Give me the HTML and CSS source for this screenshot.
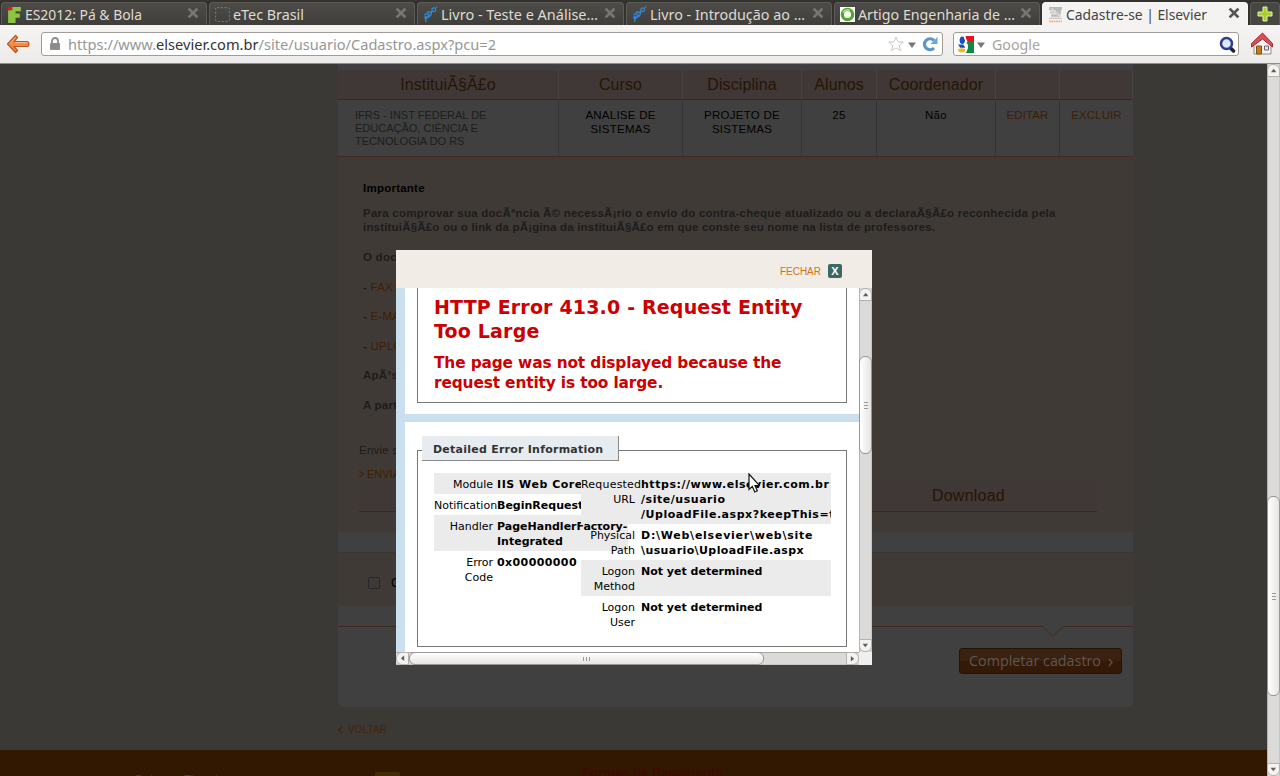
FILE: index.html
```html
<!DOCTYPE html>
<html lang="pt-BR">
<head>
<meta charset="utf-8">
<title>Cadastre-se | Elsevier</title>
<link rel="stylesheet" href="styles.css">
</head>
<body>
<svg class="defs" width="0" height="0">
  <defs>
    <symbol id="close" viewBox="0 0 12 12"><path d="M2.500 2.500l7 7M9.500 2.500l-7 7" stroke="currentColor" stroke-width="2.600" stroke-linecap="square"/></symbol>
    <symbol id="dna" viewBox="0 0 16 18"><g fill="none" stroke="#2f8de0" stroke-width="1.300"><circle cx="11.500" cy="4" r="2"/><path d="M14 1.500l1-1M7 7.500c2-1 3-1 2.500-3M4 7c3-2 7 0 4 3s-5 3-6 0M1.500 9c4-2 6 1 4 3s-4 1-4 0M2 13l4-2M3 13v4M5 9l3 2"/></g></symbol>
    <symbol id="up" viewBox="0 0 13 13"><path d="M3.500 8.500H10L6.700 4.500z" fill="#5f5f5c"/></symbol>
  </defs>
</svg>

<header class="tabs">
  <div class="tab">
    <svg class="fav" viewBox="0 0 14 16"><path d="M3 1h10v4H8v2h4v4H8v5H1V4h2z" fill="#8cc63f"/><path d="M1 1h4v3H1z" fill="#e8141c"/></svg>
    <svg class="label" width="117" height="24"><text x="0" y="19" textLength="117" lengthAdjust="spacingAndGlyphs">ES2012: Pá &amp; Bola</text></svg>
    <svg class="x"><use href="#close"/></svg>
  </div>
  <div class="tab">
    <svg class="fav" viewBox="0 0 14 16"><rect x=".5" y="1.500" width="13" height="13" rx="1.500" fill="none" stroke="#777672" stroke-dasharray="2 1.500"/></svg>
    <svg class="label" width="71" height="24"><text x="0" y="19" textLength="71" lengthAdjust="spacingAndGlyphs">eTec Brasil</text></svg>
    <svg class="x"><use href="#close"/></svg>
  </div>
  <div class="tab">
    <svg class="fav"><use href="#dna"/></svg>
    <svg class="label" width="157" height="24"><text x="0" y="19" textLength="157" lengthAdjust="spacingAndGlyphs">Livro - Teste e Análise…</text></svg>
    <svg class="x"><use href="#close"/></svg>
  </div>
  <div class="tab">
    <svg class="fav"><use href="#dna"/></svg>
    <svg class="label" width="156" height="24"><text x="0" y="19" textLength="155" lengthAdjust="spacingAndGlyphs">Livro - Introdução ao …</text></svg>
    <svg class="x"><use href="#close"/></svg>
  </div>
  <div class="tab">
    <svg class="fav" viewBox="0 0 16 16"><path d="M0 0h16v16H0z" fill="#fff"/><circle cx="8" cy="8" r="5.500" fill="none" stroke="#55a630" stroke-width="3.500"/><path d="M3.500 6a5 5 0 0 1 7-2.500" fill="none" stroke="#b5e08c" stroke-width="1.500"/></svg>
    <svg class="label" width="158" height="24"><text x="0" y="19" textLength="157" lengthAdjust="spacingAndGlyphs">Artigo Engenharia de …</text></svg>
    <svg class="x"><use href="#close"/></svg>
  </div>
  <div class="tab active">
    <svg class="fav" viewBox="0 0 14 16"><path d="M1 1h12v3H1zM2 5h4v2H2zM7 4h5v4H7zM3 8h8v2H3zM1 11h12v1H1z" fill="#aaa" opacity=".8"/><path d="M2 5l10 5M3 2l9 7" stroke="#ddd"/><path d="M1 14.500h12" stroke="#f3a871" stroke-width="1.500" stroke-dasharray="1.500 .7"/></svg>
    <svg class="label" width="142" height="24"><text x="0" y="19" textLength="141" lengthAdjust="spacingAndGlyphs">Cadastre-se | Elsevier</text></svg>
    <svg class="x"><use href="#close"/></svg>
  </div>
  <div class="newtab"><svg width="16" height="16" viewBox="0 0 16 16"><path d="M6 1h4v5h5v4h-5v5H6v-5H1V6h5z" fill="#a5cf2b" stroke="#e4f0b8"/></svg></div>
</header>

<nav class="bar">
  <svg class="back" width="24" height="20" viewBox="0 0 24 20"><path d="M9.500 1.500L1.500 10l8 8.500 2-2-3.500-4h13c2.500 0 2.500-5 0-5H8l3.500-4z" fill="#ee8a45" stroke="#c4541f" stroke-width="1.200" stroke-linejoin="round"/><path d="M4 9.500l5.500-6M9 8.700h12" stroke="#f9bd8d" fill="none"/></svg>
  <div class="field url">
    <svg width="12" height="14" viewBox="0 0 12 14"><path d="M3 6V4a3 3 0 0 1 6 0v2" fill="none" stroke="#8c8c8c" stroke-width="1.800"/><rect x="1" y="6" width="10" height="7" rx="1" fill="#8c8c8c"/></svg>
    <svg class="address" width="432" height="22"><text x="0" y="17" textLength="428" lengthAdjust="spacingAndGlyphs">https://www.<tspan class="host">elsevier.com.br</tspan>/site/usuario/Cadastro.aspx?pcu=2</text></svg>
    <svg class="star" width="16" height="16" viewBox="0 0 16 16"><path d="M8 .9l2 4.900 5.300.3-4.100 3.400 1.400 5.200L8 11.900l-4.600 2.800 1.400-5.200L.7 6.100 6 5.800z" fill="#fff" stroke="#c9c9c9"/></svg>
    <svg class="caret" width="8" height="6" viewBox="0 0 8 6"><path d="M0 .5h8L4 6z" fill="#777"/></svg>
    <svg class="reload" width="16" height="16" viewBox="0 0 16 16"><path d="M12 12A5.500 5.500 0 1 1 12 4.500" fill="none" stroke="#5b95cb" stroke-width="3.200"/><path d="M15.500 1v7H8.500z" fill="#6ca5d8"/></svg>
  </div>
  <div class="field search">
    <svg width="17" height="17" viewBox="0 0 16 16"><path d="M8 0h8v7H9z" fill="#e8131c"/><path d="M9 5h7v11H8c3-4 3-7 1-11z" fill="#128a43"/><ellipse cx="5" cy="4" rx="2.500" ry="3.500" fill="#1a50b5"/><ellipse cx="4.500" cy="13.500" rx="3.500" ry="2" fill="#f3b61f"/><path d="M1 8l5 0 2 3H3z" fill="#1a50b5"/><path d="M7 1l2 4-2 3 2 3-1 4" fill="none" stroke="#fff" stroke-width="1.500"/></svg>
    <svg class="caret" width="8" height="6" viewBox="0 0 8 6"><path d="M0 .5h8L4 6z" fill="#777"/></svg>
    <svg class="hint" width="50" height="22"><text x="0" y="17" textLength="48" lengthAdjust="spacingAndGlyphs">Google</text></svg>
    <svg class="lens" width="17" height="17" viewBox="0 0 17 17"><path d="M10.500 11l4 4" stroke="#222" stroke-width="3.500" stroke-linecap="round"/><circle cx="7.500" cy="7.500" r="5.500" fill="#dfe7f8" stroke="#2c3c94" stroke-width="2.500"/></svg>
  </div>
  <svg class="home" width="24" height="24" viewBox="0 0 24 24"><path d="M4 12v10h17V12l-8.500-8z" fill="#f4f3f1" stroke="#8f8c87"/><path d="M6.500 14h5v8h-5z" fill="#c57a1a" stroke="#875313"/><path d="M14.500 14h4v4h-4z" fill="#dce6ef" stroke="#667"/><path d="M12.500 1L1.500 11.500v3.500L12.500 7l10 8v-3.500z" fill="#d35258" stroke="#a3292f" stroke-linejoin="round"/></svg>
</nav>

<div class="window">
  <main class="page">
    <section class="card">
      <table class="courses">
        <colgroup><col class="c1"><col class="c2"><col class="c3"><col class="c4"><col class="c5"><col class="c6"><col class="c7"></colgroup>
        <tr><th>InstituiÃ§Ã£o</th><th>Curso</th><th>Disciplina</th><th>Alunos</th><th>Coordenador</th><th></th><th></th></tr>
        <tr><td class="inst">IFRS - INST FEDERAL DE EDUCAÇÃO, CIÊNCIA E TECNOLOGIA DO RS</td><td>ANALISE DE SISTEMAS</td><td>PROJETO DE SISTEMAS</td><td>25</td><td>Não</td><td class="act">EDITAR</td><td class="act">EXCLUIR</td></tr>
      </table>
      <div class="info">
        <p class="title">Importante</p>
        <p class="lead">Para comprovar sua docÃªncia Ã© necessÃ¡rio o envio do contra-cheque atualizado ou a declaraÃ§Ã£o reconhecida pela<br><span class="tight">instituiÃ§Ã£o ou o link da pÃ¡gina da instituiÃ§Ã£o em que conste seu nome na lista de professores.</span></p>
        <p>O doc</p>
        <p>- <span class="opt">FAX:</span></p>
        <p>- <span class="opt">E-MAIL</span></p>
        <p>- <span class="opt">UPLOAD</span></p>
        <p>ApÃ³s</p>
        <p>A partir</p>
        <p class="send">Envie s</p>
        <p class="sendlink"><svg width="5" height="8" viewBox="0 0 5 8"><path d="M.5 1L4 4 .5 7" fill="none" stroke="#472205" stroke-width="1.300"/></svg>ENVIAR</p>
        <div class="download">Download</div>
      </div>
      <div class="accept"><span class="box"></span><span>C</span></div>
      <div class="finish">
        <svg class="notch" width="20" height="12" viewBox="0 0 20 12"><path d="M0 0h20v1L10 11 0 1z" fill="#404040"/><path d="M0 .5L10 10.500 20 .5" fill="none" stroke="#3a2c22"/></svg>
        <div class="button"><svg width="150" height="24"><text x="1" y="17" textLength="132" lengthAdjust="spacingAndGlyphs">Completar cadastro</text><path d="M141 10l3 3.500-3 3.500" fill="none" stroke="#56524e" stroke-width="1.400"/></svg></div>
      </div>
    </section>
    <div class="return"><svg width="5" height="8" viewBox="0 0 5 8"><path d="M4 1L.8 4 4 7" fill="none" stroke="#472205" stroke-width="1.300"/></svg>VOLTAR</div>
    <footer class="foot"><span class="f1">Sobre a Elsevier</span><i class="chip"></i><b class="f2">Formas de Pagamento</b></footer>
  </main>
  <div class="vbar main-v"><span class="btn"><svg><use href="#up"/></svg></span><span class="thumb"><i></i><i></i><i></i></span><span class="btn down"><svg><use href="#up"/></svg></span></div>

  <aside class="modal">
    <div class="mhead">FECHAR<svg width="14" height="14" viewBox="0 0 14 14"><rect width="14" height="14" rx="2" fill="#3c6668"/></svg><b class="mx">X</b></div>
    <div class="mbody">
      <div class="frame">
        <div class="panel first">
          <div class="errbox">
            <h2>HTTP Error 413.0 - Request Entity Too Large</h2>
            <h3>The page was not displayed because the request entity is too large.</h3>
          </div>
        </div>
        <div class="panel second">
          <div class="detail">
            <div class="legend">Detailed Error Information</div>
            <div class="lists">
              <dl class="left">
                <div class="alt"><dt>Module</dt><dd class="s5">IIS Web Core</dd></div>
                <div><dt>Notification</dt><dd>BeginRequest</dd></div>
                <div class="alt"><dt>Handler</dt><dd>PageHandlerFactory-<br>Integrated</dd></div>
                <div><dt>Error<br>Code</dt><dd class="s4">0x00000000</dd></div>
              </dl>
              <dl class="right">
                <div class="alt"><dt><span class="wide">Requested</span><br>URL</dt><dd class="s5">https://www.elsevier.com.br<br>/site/usuario<br>/UploadFile.aspx?keepThis=true</dd></div>
                <div><dt>Physical<br>Path</dt><dd><span class="s7">D:\Web\elsevier\web\site</span><br><span class="s4">\usuario\UploadFile.aspx</span></dd></div>
                <div class="alt"><dt>Logon<br>Method</dt><dd>Not yet determined</dd></div>
                <div><dt>Logon<br>User</dt><dd>Not yet determined</dd></div>
              </dl>
            </div>
          </div>
        </div>
      </div>
      <div class="vbar modal-v"><span class="btn"><svg><use href="#up"/></svg></span><span class="thumb"><i></i><i></i><i></i></span><span class="btn down"><svg><use href="#up"/></svg></span></div>
    </div>
    <div class="hrow">
      <div class="hbar"><span class="btn lft"><svg><use href="#up"/></svg></span><span class="thumb"><i></i><i></i><i></i></span><span class="btn rgt"><svg><use href="#up"/></svg></span></div>
    </div>
  </aside>
  <svg class="cursor" width="12" height="21" viewBox="0 0 12 21"><path d="M1 1v15.500l3.300-3 2.500 5.500 2.500-1.200L7 12.500h4.500z" fill="#fff" stroke="#111" stroke-width="1.200"/></svg>
</div>
</body>
</html>
```
FILE: styles.css
```css
* { box-sizing: border-box; }
body { margin: 0; width: 1280px; height: 776px; overflow: hidden; display: flex; flex-direction: column; font-family: "Liberation Sans", Arial, sans-serif; background: #3c3b37; }
p, h2, h3, dl, dd { margin: 0; }
svg { display: block; flex: none; }
.defs { position: absolute; }

/* tab strip */
.tabs { height: 25px; flex: none; display: flex; gap: 2px; padding: 2px 0 0 1px; background: #33322e; font: 14.5px "Noto Sans", "Open Sans", sans-serif; }
.tab { width: 206.2px; height: 23px; flex: none; display: flex; align-items: center; padding: 0 7px 0 5px; border: 1px solid #5d5b56; border-bottom: 0; border-radius: 4px 4px 0 0; background: linear-gradient(#4d4c48, #3f3e3a); color: #787671; }
.fav { width: 15px; height: 17px; margin-right: 3px; }
.label { margin-top: -3px; fill: #dfdbd2; overflow: visible; }
.x { width: 12px; height: 12px; margin-left: auto; margin-top: -2px; }
.tab.active { background: #f4f3f2; border-color: #f7f7f6; color: #555; }
.tab.active .label { fill: #45443f; }
.newtab { flex: 1; height: 23px; display: flex; justify-content: center; align-items: center; border: 1px solid #5d5b56; border-bottom: 0; border-radius: 4px 4px 0 0; background: #474642; }

/* navigation bar */
.bar { height: 39px; flex: none; display: flex; align-items: center; padding: 0 6px 0 6px; background: linear-gradient(#f5f4f3, #edebe9); border-bottom: 1px solid #918e8a; font: 14.5px "Noto Sans", "Open Sans", sans-serif; }
.back { margin-right: 11px; }
.field { height: 24px; display: flex; align-items: center; background: #fff; border: 1px solid #a09c97; border-radius: 3px; }
.url { width: 902px; padding: 0 4px 0 7px; }
.address { margin-left: 7px; fill: #979797; overflow: visible; }
.host { fill: #333; }
.star { margin-left: auto; }
.caret { margin: 2px 5px 0 4px; }
.reload { margin-left: 1px; }
.search { width: 286px; margin-left: 10px; padding: 0 2px 0 3px; }
.search .caret { margin: 2px 7px 0 3px; }
.hint { fill: #a8a39d; overflow: visible; }
.lens { margin-left: auto; }
.home { margin-left: 11px; }

/* dimmed site */
.window { position: relative; flex: 1; display: flex; }
.page { width: 1267px; height: 712px; overflow: hidden; background: #3b3936; }
.card { width: 795px; height: 643px; margin-left: 338px; padding-top: 6px; background: #404040; border-radius: 0 0 5px 5px; }
.courses { width: 795px; table-layout: fixed; border-collapse: separate; border-spacing: 0; font-size: 11.5px; letter-spacing: .25px; line-height: 14px; text-align: center; color: #000; }
.c1 { width: 221px; } .c2 { width: 124px; } .c3 { width: 119px; } .c4 { width: 75px; } .c5 { width: 119px; } .c6 { width: 64px; } .c7 { width: 73px; }
.courses th { height: 30px; padding: 0; font-size: 16px; letter-spacing: .1px; font-weight: 400; color: #271503; background: #403836; border-right: 1px solid #454241; border-bottom: 1px solid #362820; }
.courses td { height: 57px; padding: 8px 8px 0; vertical-align: top; border-right: 1px solid #353434; border-bottom: 1px solid #3e2a1f; }
.courses td:last-child { border-right: 0; }
.courses .inst { padding: 9px 40px 0 17px; text-align: left; font-size: 11px; letter-spacing: 0; line-height: 13px; color: #1d1d1d; }
.courses .act { padding: 8px 0 0; letter-spacing: .1px; color: #3f1e02; }
.info { height: 375px; padding: 24px 0 0 25px; background: #403a36; color: #1c1c1c; font-size: 11.5px; letter-spacing: .24px; line-height: 14px; font-weight: 700; }
.info p { margin-bottom: 15.5px; }
.info .title { color: #000; margin-bottom: 11px; }
.info .lead { margin-bottom: 16px; white-space: nowrap; }
.tight { letter-spacing: .19px; }
.opt { font-weight: 400; color: #3f1e02; }
.info .send { margin: 31px 0 0 -4px; font-weight: 400; }
.info .sendlink { display: flex; align-items: center; gap: 3px; margin: 10px 0 0 -4px; font-size: 11px; letter-spacing: 0; font-weight: 400; color: #3f1e02; }
.download { display: flex; justify-content: flex-end; align-items: center; width: 738px; height: 31px; margin-left: -4px; padding-right: 92px; font-size: 16px; font-weight: 400; color: #271503; background: #403836; border-bottom: 1px solid #302b28; }
.accept { height: 54px; margin-top: 20px; padding-left: 30px; display: flex; align-items: center; gap: 11px; background: #403a36; border-top: 1px solid #383533; font-size: 12px; color: #000; padding-top: 6px; }
.box { width: 12px; height: 12px; border: 1px solid #24282b; border-radius: 2px; }
.finish { height: 81px; margin-top: 20px; padding: 21px 11px 0 0; border-top: 1px solid #40291a; position: relative; display: flex; justify-content: flex-end; align-items: flex-start; }
.notch { position: absolute; left: 705px; top: -1px; }
.button { width: 163px; height: 26px; padding-left: 8px; border: 1px solid #231405; border-radius: 3px; background: linear-gradient(#3a2110 50%, #341a06 50%); font: 400 15px "Open Sans", sans-serif; fill: #5c5855; }
.return { height: 43px; padding: 2px 0 0 338px; display: flex; align-items: center; gap: 5px; font-size: 10px; letter-spacing: .1px; color: #472205; }
.foot { height: 26px; display: flex; overflow: hidden; padding: 16px 0 0 134px; background: #331800; font-size: 13px; line-height: 14px; color: #47372e; }
.f1 { width: 241px; padding-top: 7px; }
.chip { width: 25px; height: 12px; margin-top: 6px; border-radius: 2px; background: #402c00; }
.f2 { margin-left: 182px; letter-spacing: .1px; color: #3d0b05; }

/* scrollbars */
.vbar { width: 13px; flex: none; display: flex; flex-direction: column; background: #dcdad8; border-left: 1px solid #b8b4b0; border-right: 1px solid #c8c5c2; }
.btn { width: 13px; height: 13px; flex: none; margin-left: -1px; border: 1px solid #b5b1ad; border-radius: 6px 6px 0 0; background: #f4f3f2; }
.btn svg { width: 11px; height: 11px; }
.btn.down { transform: rotate(180deg); margin-top: auto; }
.thumb { flex: none; display: flex; flex-direction: column; justify-content: center; align-items: center; gap: 2px; border: 1px solid #999691; border-radius: 6px; background: linear-gradient(90deg, #fff, #e7e5e3); }
.thumb i { width: 4px; height: 1px; background: #999; }
.vbar .thumb { width: 13px; margin-left: -1px; }
.main-v .thumb { height: 200px; margin-top: 419px; }
.modal-v .thumb { height: 98px; margin-top: 55px; }
.hrow { display: flex; height: 13px; background: #f0efee; }
.hbar { width: 463px; display: flex; background: #dcdad8; border-top: 1px solid #aaa6a2; border-bottom: 1px solid #c8c5c2; }
.hbar .btn { margin: -1px 0 0; }
.hbar .lft { transform: rotate(-90deg); }
.hbar .rgt { transform: rotate(90deg); margin-left: auto; }
.hbar .thumb { width: 355px; height: 13px; margin-top: -1px; flex-direction: row; background: linear-gradient(#fff, #e7e5e3); }
.hbar .thumb i { width: 1px; height: 4px; }

/* modal window */
.modal { position: absolute; left: 396px; top: 186px; width: 476px; height: 415px; display: flex; flex-direction: column; background: #fff; }
.mhead { position: relative; height: 38px; display: flex; justify-content: flex-end; align-items: center; gap: 7px; padding: 4px 30px 0 0; background: #f1ece6; font-size: 10px; color: #d6720f; }
.mx { position: absolute; right: 30px; top: 14px; width: 14px; text-align: center; font-size: 11px; line-height: 14px; color: #fff; }
.mbody { display: flex; height: 364px; }
.frame { width: 463px; padding-left: 9px; overflow: hidden; background: #cae0ee; font-family: "DejaVu Sans", Verdana, sans-serif; font-size: 11px; color: #000; }
.panel { background: #fff; padding: 0 12px; }
.first { height: 126px; }
.errbox { height: 115px; width: 430px; padding: 7px 10px 0 16px; border: 1px solid #777; border-top: 0; color: #c00; }
.errbox h2 { font-size: 19px; letter-spacing: .17px; line-height: 24px; }
.errbox h3 { margin-top: 10px; font-size: 15.4px; letter-spacing: -.15px; line-height: 20px; }
.second { margin-top: 8px; height: 230px; padding-top: 28px; }
.detail { width: 430px; height: 197px; padding-left: 4px; border: 1px solid #777; }
.legend { width: 197px; height: 25px; margin-top: -15px; padding: 1px 0 0 11px; line-height: 25px; letter-spacing: .24px; font-weight: 700; color: #333; background: #e7ecf0; border-right: 1px solid #888; border-bottom: 1px solid #888; }
.lists { display: flex; margin: 12px 0 0 12px; line-height: 15px; }
.lists dl > div { display: flex; padding: 4px 0 2px; }
.lists .alt { background: #ebebeb; }
.lists dt { flex: none; text-align: right; }
.lists dd { font-weight: 700; white-space: nowrap; }
.lists .s4 { letter-spacing: .4px; }
.lists .s5 { letter-spacing: .54px; }
.lists .s7 { letter-spacing: .75px; }
.left { width: 194px; margin-right: -47px; }
.left dt { width: 59px; margin-right: 4px; white-space: nowrap; }
.right { position: relative; width: 250px; overflow: hidden; }
.right dt { width: 54px; margin-right: 6px; }
.wide { white-space: nowrap; letter-spacing: .2px; }
.cursor { position: absolute; left: 748px; top: 409px; }
```
